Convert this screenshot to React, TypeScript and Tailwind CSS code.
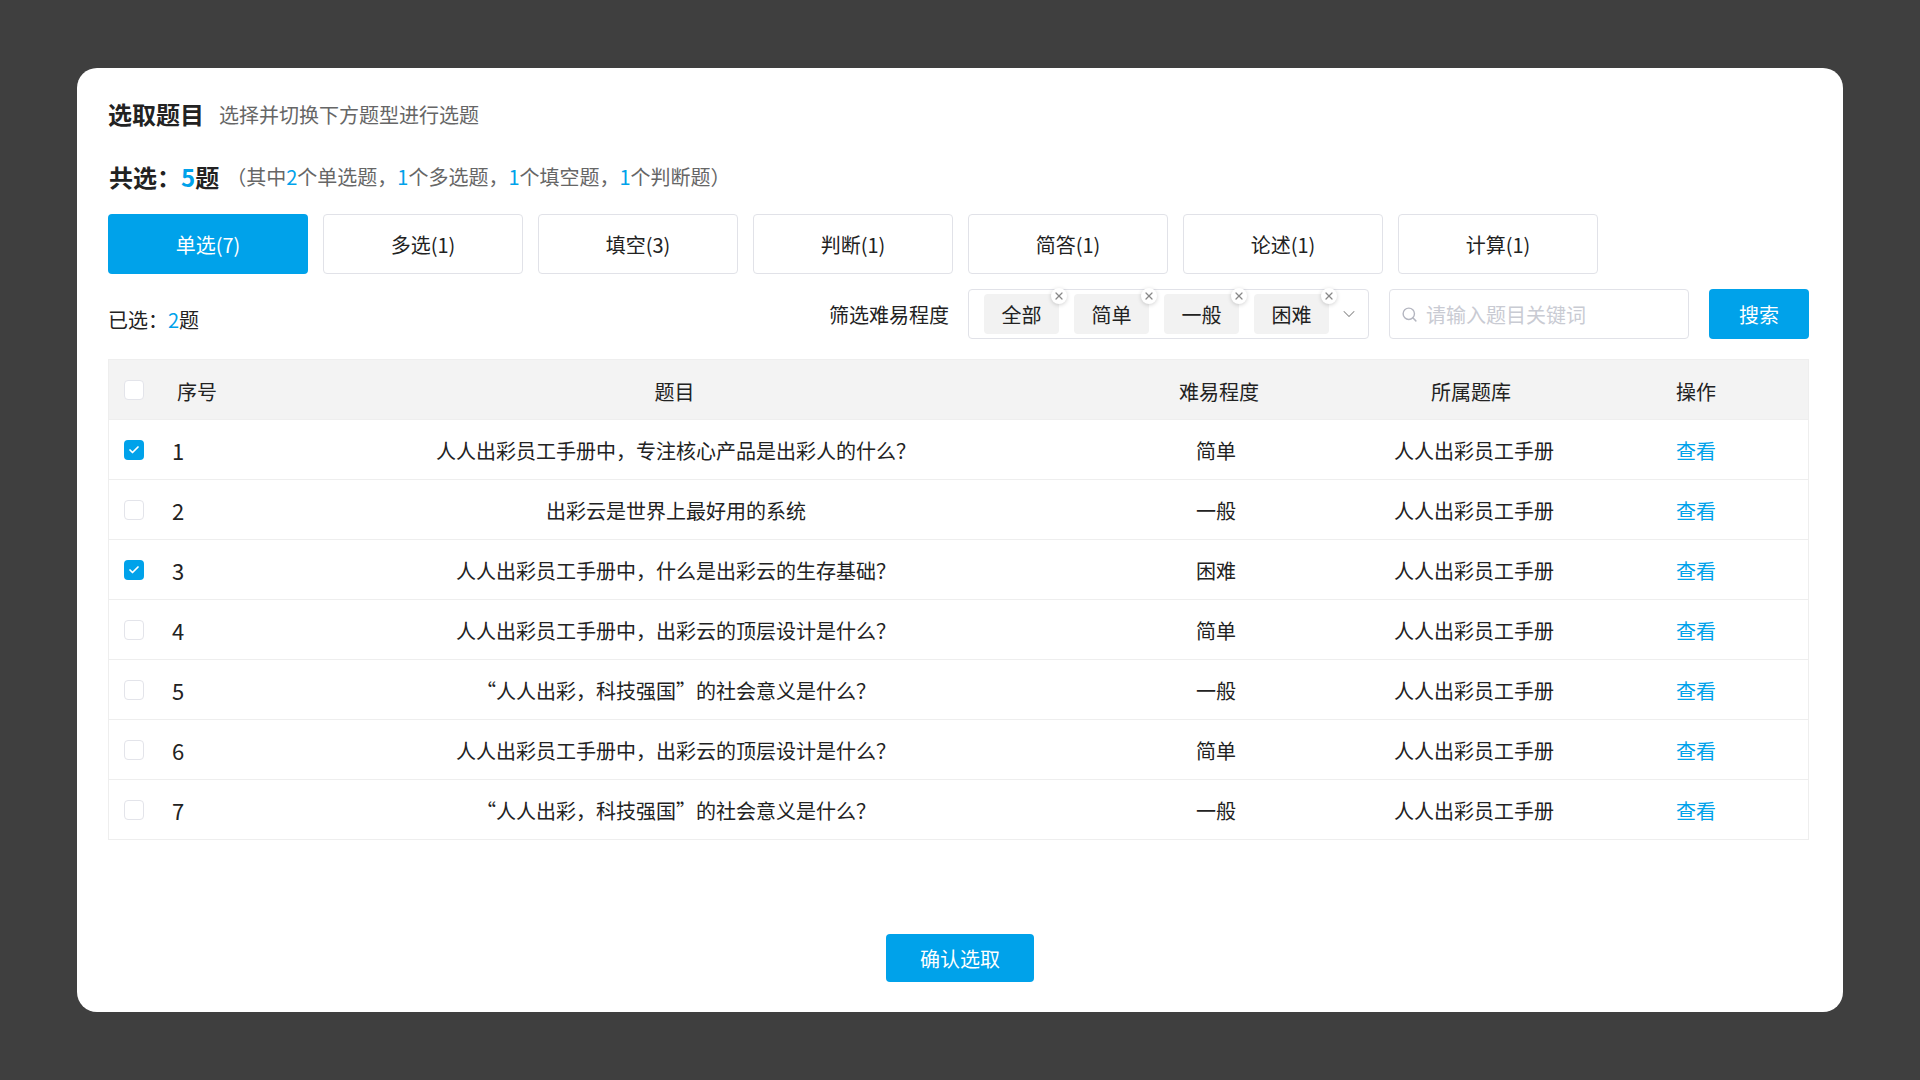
import { ChevronDown, Search, X, Check } from 'lucide-react';

const tabs = ['单选(7)', '多选(1)', '填空(3)', '判断(1)', '简答(1)', '论述(1)', '计算(1)'];
const levels = ['全部', '简单', '一般', '困难'];

const rows = [
  { id: 1, title: '人人出彩员工手册中，专注核心产品是出彩人的什么？', level: '简单', checked: true },
  { id: 2, title: '出彩云是世界上最好用的系统', level: '一般', checked: false },
  { id: 3, title: '人人出彩员工手册中，什么是出彩云的生存基础？', level: '困难', checked: true },
  { id: 4, title: '人人出彩员工手册中，出彩云的顶层设计是什么？', level: '简单', checked: false },
  { id: 5, title: '“人人出彩，科技强国”的社会意义是什么？', level: '一般', checked: false },
  { id: 6, title: '人人出彩员工手册中，出彩云的顶层设计是什么？', level: '简单', checked: false },
  { id: 7, title: '“人人出彩，科技强国”的社会意义是什么？', level: '一般', checked: false },
];

function Checkbox({ checked }: { checked: boolean }) {
  if (checked) {
    return (
      <span className="flex h-5 w-5 items-center justify-center rounded-[4px] bg-[#00a2ea]">
        <Check size={12} strokeWidth={3.5} className="text-white" />
      </span>
    );
  }
  return <span className="block h-5 w-5 rounded-[4px] border border-[#e3e4ea] bg-white" />;
}

export default function App() {
  return (
    <div className="flex min-h-[1080px] justify-center bg-[#3f3f3f] pt-[68px] font-['Noto_Sans_CJK_SC','Noto_Sans',sans-serif] text-[20px] text-[#222]">
      <div className="flex h-[944px] w-[1766px] flex-col rounded-[20px] bg-white pt-[30px] pr-[34px] pb-[30px] pl-[31px]">
        {/* 标题 */}
        <div className="flex h-[34px] items-center">
          <span className="pb-[2px] text-[24px] leading-[34px] font-bold">选取题目</span>
          <span className="ml-[15px] leading-[34px] text-[#666]">选择并切换下方题型进行选题</span>
        </div>

        {/* 合计 */}
        <div className="mt-[28px] flex h-[34px] items-center pl-px">
          <span className="text-[24px] leading-[34px] font-bold">
            共选：<span className="text-[#00a2ea]">5</span>题
          </span>
          <span className="ml-[7px] leading-[34px] text-[#666]">
            （其中<span className="text-[#00a2ea]">2</span>个单选题，
            <span className="text-[#00a2ea]">1</span>个多选题，
            <span className="text-[#00a2ea]">1</span>个填空题，
            <span className="text-[#00a2ea]">1</span>个判断题）
          </span>
        </div>

        {/* 题型切换 */}
        <div className="mt-[20px] flex gap-[15px]">
          {tabs.map((tab, i) => (
            <div
              key={tab}
              className={
                i === 0
                  ? 'flex h-[60px] w-[200px] items-center justify-center rounded-[4px] bg-[#00a2ea] pt-[2px] text-white'
                  : 'flex h-[60px] w-[200px] items-center justify-center rounded-[4px] border border-[#e1e2e8] bg-white pt-[2px]'
              }
            >
              {tab}
            </div>
          ))}
        </div>

        {/* 筛选 */}
        <div className="mt-[15px] flex h-[50px] items-center">
          <span className="mt-[12px]">
            已选：<span className="text-[#00a2ea]">2</span>题
          </span>
          <span className="ml-auto pt-[2px]">筛选难易程度</span>
          <div className="ml-[19px] flex h-[50px] w-[401px] items-center gap-[15px] rounded-[4px] border border-[#e1e2e8] pl-[15px]">
            {levels.map((level) => (
              <div
                key={level}
                className="relative flex h-[40px] w-[75px] items-center justify-center rounded-[4px] bg-[#f2f2f2] pt-[2px]"
              >
                {level}
                <span className="absolute top-[-6px] right-[-8px] flex h-4 w-4 items-center justify-center rounded-full bg-white shadow-[0_1px_4px_rgba(0,0,0,0.18)]">
                  <X size={12} strokeWidth={2.5} className="text-[#888]" />
                </span>
              </div>
            ))}
            <ChevronDown size={20} strokeWidth={1.25} className="ml-[-5px] text-[#888]" />
          </div>
          <div className="ml-[20px] flex h-[50px] w-[300px] items-center rounded-[4px] border border-[#e1e2e8] pl-[11px]">
            <Search size={17} className="text-[#b4b6c0]" />
            <span className="ml-[8px] pt-[2px] text-[#c9cbd3]">请输入题目关键词</span>
          </div>
          <div className="ml-[20px] flex h-[50px] w-[100px] items-center justify-center rounded-[4px] bg-[#00a2ea] pt-[2px] text-white">
            搜索
          </div>
        </div>

        {/* 表格 */}
        <div className="mt-[20px] border border-b-0 border-[#eeeeee]">
          <div className="grid h-[60px] grid-cols-[64px_68px_867px_218px_298px_146px] items-center border-b border-[#eeeeee] bg-[#f3f3f3]">
            <span className="pl-[15px]">
              <Checkbox checked={false} />
            </span>
            <span className="pt-[4px] pl-[4px]">序号</span>
            <span className="pt-[4px] text-center">题目</span>
            <span className="pt-[4px] pl-[4px] text-center">难易程度</span>
            <span className="pt-[4px] pr-[8px] text-center">所属题库</span>
            <span className="pt-[4px] pr-[2px] text-center">操作</span>
          </div>
          {rows.map((row) => (
            <div
              key={row.id}
              className="grid h-[60px] grid-cols-[64px_68px_867px_218px_298px_146px] items-center border-b border-[#eeeeee]"
            >
              <span className="pl-[15px]">
                <Checkbox checked={row.checked} />
              </span>
              <span className="ml-[-1px] pt-[1px] text-[22px] leading-[30px]">{row.id}</span>
              <span className="pt-[3px] pl-[3px] text-center">{row.title}</span>
              <span className="pt-[3px] pr-[2px] text-center">{row.level}</span>
              <span className="pt-[3px] pr-[2px] text-center">人人出彩员工手册</span>
              <span className="pt-[3px] pr-[2px] text-center text-[#00a2ea]">查看</span>
            </div>
          ))}
        </div>

        <div className="mt-auto flex justify-center pl-[3px]">
          <div className="flex h-[48px] w-[148px] items-center justify-center rounded-[4px] bg-[#00a2ea] pt-[2px] text-white">
            确认选取
          </div>
        </div>
      </div>
    </div>
  );
}
